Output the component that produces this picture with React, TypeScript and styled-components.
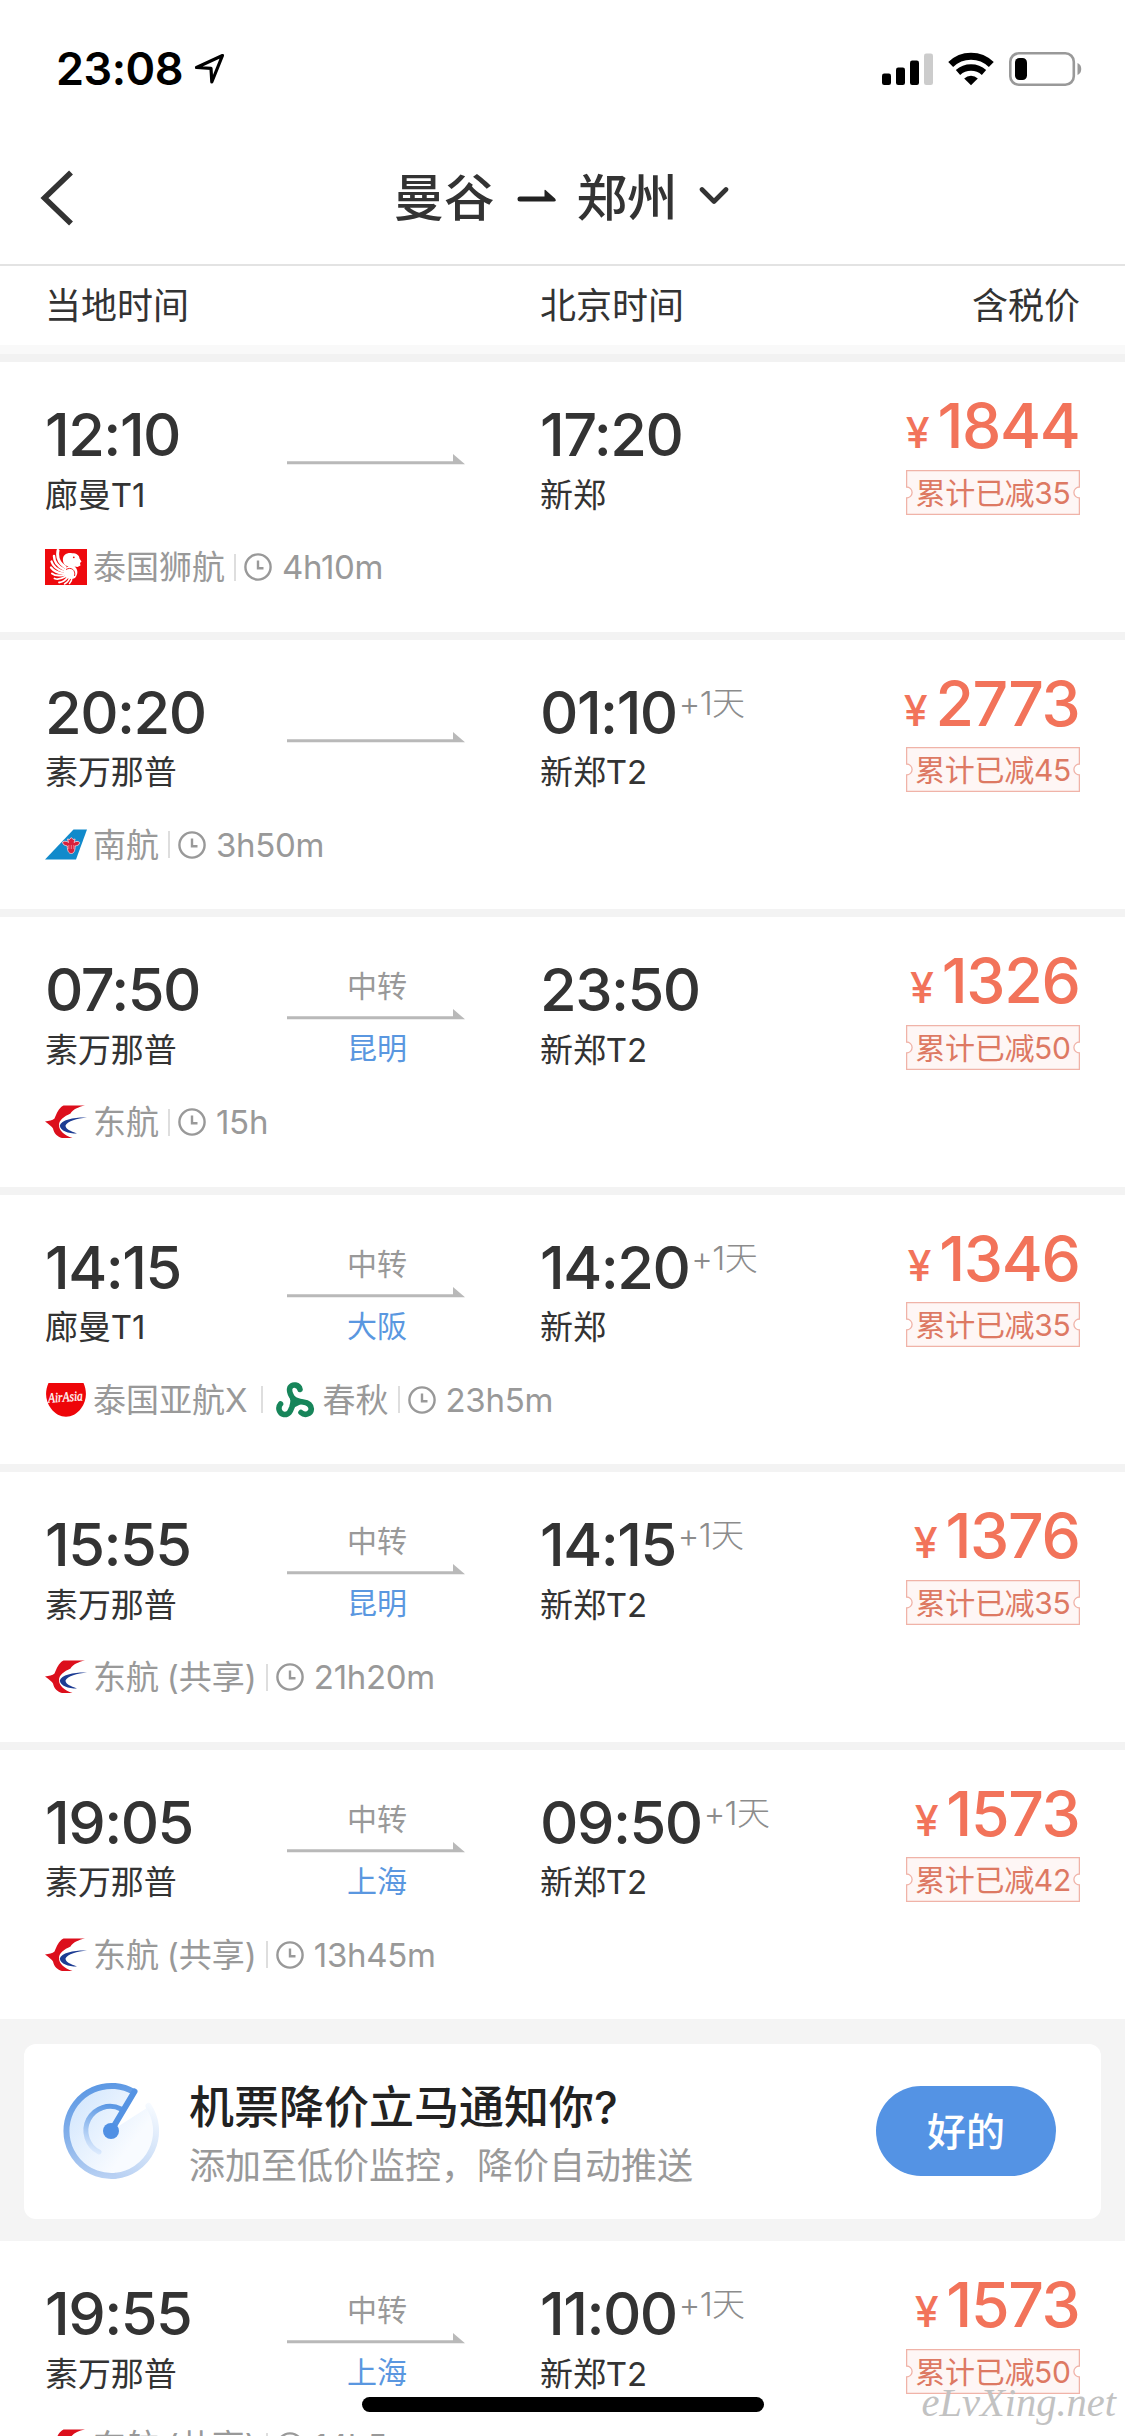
import React from "react";
import styled, { createGlobalStyle } from "styled-components";

const GlobalStyle = createGlobalStyle`
  * { box-sizing: border-box; }
  body {
    margin: 0;
    background: #fff;
    color: #333;
    font-family: Inter, "Noto Sans CJK SC", sans-serif;
    font-weight: 370;
  }
`;

const Screen = styled.div`
  position: relative;
  width: 1125px;
  height: 2436px;
  overflow: hidden;
  background: #fff;
  display: flex;
  flex-direction: column;
`;

const StatusBar = styled.div`
  flex: none;
  height: 132px;
  padding: 46px 43px 41px 56px;
  display: flex;
  align-items: center;
  color: #000;
`;

const Clock = styled.span`
  font-size: 45px;
  line-height: 45px;
  font-weight: 600;
  letter-spacing: -0.5px;
  margin-right: 11px;
`;

const StatusIcons = styled.div`
  margin-left: auto;
  display: flex;
  align-items: center;
  gap: 15px;
`;

const NavBar = styled.header`
  flex: none;
  height: 134px;
  padding: 0 40px;
  border-bottom: 2px solid #e3e3e3;
  display: grid;
  grid-template-columns: 48px 1fr 48px;
  align-items: center;
`;

const Title = styled.h1`
  margin: 0;
  padding-right: 3px;
  display: flex;
  align-items: center;
  justify-content: center;
  font-size: 50.5px;
  line-height: 60px;
  font-weight: 500;
  svg:first-of-type { margin: 0 20px 0 22px; }
  svg:last-of-type { margin-left: 21px; }
`;

const ColumnHeads = styled.div`
  flex: none;
  height: 79px;
  padding: 0 45px;
  display: grid;
  grid-template-columns: 495px 1fr auto;
  align-items: center;
  font-size: 36px;
  line-height: 40px;
`;

const HeaderShade = styled.div`
  flex: none;
  height: 17px;
  background: linear-gradient(#f9f9f9 0 9px, #f2f2f2 9px);
`;

const List = styled.div`
  flex: none;
  display: flex;
  flex-direction: column;
  gap: 8px;
  background: #f3f3f3;
`;

const Card = styled.article`
  height: 269.5px;
  padding: 32px 45px 0;
  background: #fff;
`;

const Main = styled.div`
  height: 120px;
  display: grid;
  grid-template-columns: 242px 178px 75px 1fr auto;
`;

const Stop = styled.div<{ $col: number }>`
  grid-column: ${(p) => p.$col};
  padding-top: 10px;
  display: flex;
  flex-direction: column;
  gap: 10.5px;
`;

const TimeRow = styled.div`
  display: flex;
  align-items: flex-start;
  white-space: nowrap;
`;

const Time = styled.span`
  font-size: 59.5px;
  line-height: 60px;
  font-weight: 500;
  letter-spacing: -1.5px;
`;

const DayShift = styled.sup`
  margin: 1px 0 0 2px;
  font-size: 33px;
  line-height: 40px;
  font-weight: 300;
  letter-spacing: -0.6px;
  color: #8c8c8c;
`;

const Airport = styled.div`
  font-size: 33px;
  line-height: 40px;
  letter-spacing: -0.1px;
  white-space: nowrap;
`;

const Route = styled.div`
  grid-column: 2;
  padding-top: 19px;
  height: 122px;
  display: grid;
  grid-template-rows: 36px 16px 46px;
  justify-items: center;
  align-items: end;
  font-size: 30px;
  line-height: 36px;
`;

const Via = styled.span`
  align-self: start;
  color: #999;
  padding-left: 2px;
`;

const ViaCity = styled(Via)`
  align-self: end;
  color: #5a97e0;
`;

const PriceCol = styled.div`
  grid-column: 5;
  display: flex;
  flex-direction: column;
  align-items: flex-end;
  gap: 13.5px;
`;

const Price = styled.div`
  display: flex;
  align-items: baseline;
  height: 62px;
  margin-right: 0.5px;
  color: #f2735a;
  font-size: 62.5px;
  line-height: 62px;
  font-weight: 500;
  letter-spacing: -1.3px;
`;

const Yen = styled.span`
  font-size: 43px;
  line-height: 43px;
  margin-right: 9px;
`;

const BadgeBox = styled.div`
  position: relative;
  width: 174px;
  height: 45px;
  display: flex;
  justify-content: center;
  font-size: 30px;
  line-height: 46px;
  letter-spacing: -0.3px;
  color: #dd7963;
  svg { position: absolute; inset: 0; }
  span { position: relative; }
`;

const Meta = styled.div`
  height: 40px;
  display: flex;
  align-items: center;
  font-size: 33px;
  line-height: 40px;
  color: #999;
  white-space: nowrap;
  margin-top: 33px;
`;

const Airline = styled.span`
  display: flex;
  align-items: center;
  word-spacing: -1.5px;
  svg { margin-right: 6px; flex: none; }
`;

const Bar = styled.i<{ $l: number; $r: number }>`
  width: 2px;
  height: 27px;
  background: #dedede;
  margin: 0 ${(p) => p.$r}px 0 ${(p) => p.$l}px;
`;

const Duration = styled.span`
  margin-left: 10px;
  letter-spacing: -0.3px;
`;

const Promo = styled.section`
  flex: none;
  height: 222px;
  padding: 25px 24px 22.5px;
  background: #f4f4f4;
`;

const PromoCard = styled.div`
  height: 174.5px;
  border-radius: 12px;
  background: #fff;
  padding: 0 45px 0 38px;
  display: flex;
  align-items: center;
`;

const PromoText = styled.div`
  margin-left: 29px;
  padding-top: 4px;
  flex: 1;
`;

const PromoTitle = styled.div`
  font-size: 45px;
  line-height: 60px;
  font-weight: 500;
  color: #222;
`;

const PromoSub = styled.div`
  font-size: 36px;
  line-height: 50px;
  margin-top: 3px;
  margin-bottom: -3px;
  color: #999;
`;

const OkButton = styled.button`
  width: 180px;
  height: 90px;
  border: 0;
  border-radius: 45px;
  background: #5493e4;
  color: #fff;
  font: 500 39px/90px Inter, "Noto Sans CJK SC", sans-serif;
`;

const HomeIndicator = styled.div`
  position: absolute;
  left: 362px;
  bottom: 24px;
  width: 402px;
  height: 15px;
  border-radius: 8px;
  background: #000;
`;

const Watermark = styled.div`
  position: absolute;
  right: 9px;
  bottom: 8px;
  font: italic 40.5px/50px "Liberation Serif", serif;
  color: #c2c2c2;
`;

const LocationIcon = () => (
  <svg width="31" height="32" viewBox="0 0 31 32" fill="none" stroke="#000" strokeWidth="3.2" strokeLinejoin="round">
    <path d="M28.5 2.500 2.500 14.500 17 15.300 17.800 29z" />
  </svg>
);

const SignalIcon = () => (
  <svg width="51" height="34" viewBox="0 0 51 34">
    <rect x="0" y="21.500" width="9" height="11.500" rx="2.200" />
    <rect x="14" y="15.500" width="9" height="17.500" rx="2.200" />
    <rect x="28" y="8.500" width="9" height="24.500" rx="2.200" />
    <rect x="42" y="1.500" width="9" height="31.500" rx="2.200" fill="#ccc" />
  </svg>
);

const WifiIcon = () => (
  <svg width="46" height="34" viewBox="0 0 46 34" fill="none" stroke="#000">
    <path d="M2.700 12.500A29 29 0 0 1 43.300 12.500" strokeWidth="7" />
    <path d="M10 20.500A19.500 19.500 0 0 1 36 20.500" strokeWidth="6.500" />
    <path d="M16.200 26.500A10 10 0 0 1 29.800 26.500L23 33.300z" fill="#000" stroke="none" />
  </svg>
);

const BatteryIcon = () => (
  <svg width="73" height="34" viewBox="0 0 73 34">
    <rect x="1.300" y="1.300" width="63.500" height="31.400" rx="8.500" fill="none" stroke="#999" strokeWidth="2.600" />
    <rect x="6" y="6" width="12" height="22" rx="4.500" />
    <path d="M68.500 11c5 1.500 5 10.500 0 12z" fill="#999" />
  </svg>
);

const BackIcon = () => (
  <svg width="34" height="56" viewBox="0 0 34 56" fill="none" stroke="#333" strokeWidth="5.600">
    <path d="M31 2.500 4.500 28 31 53.500" />
  </svg>
);

const TitleArrow = () => (
  <svg width="40" height="60" viewBox="0 0 40 60">
    <path d="M3 28.500h24.500V22.500q0-1 1-.5l9.500 8.500q2 3-1 3H3a2.500 2.500 0 0 1 0-5z" fill="#222" />
  </svg>
);

const DownIcon = () => (
  <svg width="30" height="60" viewBox="0 0 30 60" fill="none" stroke="#333" strokeWidth="4.600" strokeLinecap="round" strokeLinejoin="round">
    <path d="M3 21.500 15 33.500 27 21.500" />
  </svg>
);

const RouteArrow = () => (
  <svg width="178" height="11" viewBox="0 0 178 11" fill="#b9b9b9">
    <path d="M0 7.300H166V0L178 10.300H0z" />
  </svg>
);

const ClockIcon = () => (
  <svg width="28" height="28" viewBox="0 0 28 28" fill="none" stroke="#999" strokeWidth="2.400">
    <circle cx="14" cy="14" r="12.600" />
    <path d="M14 7.500V15.300H19.500" />
  </svg>
);

const LionLogo = () => (
  <svg width="42" height="36" viewBox="0 0 42 36">
    <rect width="42" height="36" fill="#ee0a0e" />
    <g fill="none" stroke="#fff" strokeLinecap="round">
      <path d="M13 1.500C11.500 9 14 14 20 18" strokeWidth="3" />
      <path d="M9 7C9 13 12 17 19 20.500" strokeWidth="2.500" />
      <path d="M6.500 12.500C8 17.500 12 20.500 18 22.500" strokeWidth="2.300" />
      <path d="M6 18.500C9 22.500 13 24 18 24.500" strokeWidth="2.200" />
      <path d="M7 24.500C10 27 14 27 19 26" strokeWidth="2" />
      <path d="M9.500 29.500C13 31 17 29.500 20.500 27.500" strokeWidth="1.900" />
      <path d="M14 33.500C18 33 20.500 31 22.500 28.500" strokeWidth="1.800" />
      <path d="M19.500 35C22.500 33.500 24 31 25 28.500M24.500 34.500C26 33 27 31 27 28" strokeWidth="1.500" />
    </g>
    <path d="M18 12C17 6 22 3.500 27 4.200C31 4 34.500 6 34.500 9.500L36.500 12.500 35 14l.5 2.500-3 1.500-3-.5C33 20 33.500 25 30 29C25 31.500 19 29 18.500 23.500C18.500 19 22 17.500 25 17.500C20.500 17.500 18.500 15 18 12z" fill="#fff" />
    <path d="M21 20.500C26 17.500 31 21 29.500 27" fill="none" stroke="#ee0a0e" strokeWidth=".9" />
    <circle cx="28.800" cy="8.300" r=".9" fill="#ee0a0e" />
  </svg>
);

const SouthernLogo = () => (
  <svg width="42" height="36" viewBox="0 0 42 36">
    <path d="M28.500 2.500H42L31 32.500H0z" fill="#118acb" />
    <path
      d="M17.500 15c2.500-1.500 5-.5 6 .5l-1-3.500 2 .5 1.800-2 1.800 2 2-.5-1 3.500c1.500-1.500 4.500-1.500 5.500 0 0 3-3 3-4.500 3.500 0 4.500-1 7.500-3.800 7.500s-4-3-4-7.500c-2-.5-4.800-1-4.800-4z"
      fill="#d9203a"
      stroke="#f4c6cf"
      strokeWidth=".9"
    />
    <path d="M23.800 18v4M26.300 18v4M28.800 18v4" stroke="#f3a9b4" strokeWidth=".7" />
  </svg>
);

const EasternLogo = () => (
  <svg width="42" height="36" viewBox="0 0 42 36">
    <path d="M18.500 1.500H40C33 3 28 5.500 25.500 9.500C19 12.500 14 16 14 21C14 27 19.500 31.500 27.500 34H17C12.500 33 9 29.500 8 24.500C7 22.500 4 20.500 0 17.500C4 17 7.500 16.500 9.500 14.500C11.500 10 13.500 4 18.500 1.500z" fill="#dc0f1c" />
    <path d="M42 13.500C31 13 16 15.500 14.800 21.500C15.500 27 23 29.500 32 29.500C25.500 27 20.500 25 20.500 21.500C22.500 17 32 14.500 42 13.500z" fill="#1d3c93" />
  </svg>
);

const AirAsiaLogo = () => (
  <svg width="42" height="36" viewBox="0 0 42 36">
    <path d="M3.500 1H38.500C42.500 10 41.500 19 36 26.500C28 37.500 14 37.500 6 26.500C.5 19-.5 10 3.500 1z" fill="#ee0509" />
    <text x="3" y="19.500" fill="#fff" stroke="#fff" strokeWidth=".3" fontFamily="Liberation Serif" fontStyle="italic" fontSize="14" textLength="35" lengthAdjust="spacingAndGlyphs" transform="rotate(-4 21 18)">AirAsia</text>
  </svg>
);

const SpringLogo = () => (
  <svg width="41" height="36" viewBox="0 0 41 36" fill="none" stroke="#17855a" strokeWidth="5.600" strokeLinecap="round" strokeLinejoin="round">
    <path d="M24 7.500C23 2.500 16.500 1.500 14 5.500C12.500 9 14 12 17 16.500" />
    <path d="M4.500 22C1.500 25.500 3 31.500 8 32.500C13 33 14.500 29 16 25C17 22 17.500 20 17 16.500" />
    <path d="M25 30.500C29 34 35 32 35.300 27C35 22.500 31 20.500 27 20C23 19.500 20 19 17 16.500" />
    <path d="M17 16 24 21 16 25z" fill="#17855a" strokeWidth="3" />
  </svg>
);

const RadarIcon = () => (
  <svg width="98" height="98" viewBox="0 0 98 98" fill="none">
    <defs>
      <linearGradient id="ring" x1="40" y1="2" x2="54" y2="94" gradientUnits="userSpaceOnUse">
        <stop offset="0" stopColor="#5c98e4" />
        <stop offset=".5" stopColor="#84b0ea" />
        <stop offset="1" stopColor="#b9d1f3" />
      </linearGradient>
      <linearGradient id="disc" x1="15" y1="20" x2="70" y2="62" gradientUnits="userSpaceOnUse">
        <stop offset="0" stopColor="#d6e8fd" />
        <stop offset="1" stopColor="#f8fbff" />
      </linearGradient>
      <linearGradient id="inner" x1="50" y1="24" x2="38" y2="72" gradientUnits="userSpaceOnUse">
        <stop offset="0" stopColor="#5c98e4" />
        <stop offset="1" stopColor="#dceafd" />
      </linearGradient>
      <linearGradient id="tail" x1="54" y1="94" x2="88" y2="22" gradientUnits="userSpaceOnUse">
        <stop offset="0" stopColor="#b9d1f3" />
        <stop offset=".6" stopColor="#dce9fa" />
        <stop offset="1" stopColor="#f6faff" />
      </linearGradient>
    </defs>
    <path d="M49 49 72 9A46 46 0 1 0 88 24z" fill="url(#disc)" />
    <path d="M86.500 24A45 45 0 0 1 54 93.700" stroke="url(#tail)" strokeWidth="6" strokeLinecap="round" />
    <path d="M72 10A45 45 0 1 0 54 93.700" stroke="url(#ring)" strokeWidth="6" />
    <path d="M59 27A24 24 0 0 0 37 70" stroke="url(#inner)" strokeWidth="5" strokeLinecap="round" />
    <path d="M49 49 72.500 9.500" stroke="#5593e3" strokeWidth="6" strokeLinejoin="round" strokeLinecap="round" />
    <circle cx="49" cy="49" r="8" fill="#5090e4" />
  </svg>
);

const Badge = ({ amount }: { amount: number }) => (
  <BadgeBox>
    <svg width="174" height="45" viewBox="0 0 174 45" fill="#fef6f5" stroke="#f0b3a8" strokeWidth="1.300">
      <path d="M.6.6H173.400V17A5.500 5.500 0 0 0 173.400 28V44.400H.6V28A5.500 5.500 0 0 0 .6 17z" />
    </svg>
    <span>累计已减{amount}</span>
  </BadgeBox>
);

const logos = { lion: LionLogo, southern: SouthernLogo, eastern: EasternLogo, airasia: AirAsiaLogo, spring: SpringLogo };

type Flight = {
  dep: string;
  from: string;
  arr: string;
  to: string;
  nextDay?: boolean;
  via?: string;
  price: number;
  cut: number;
  airlines: [keyof typeof logos, string][];
  duration: string;
};

const flights: Flight[] = [
  { dep: "12:10", from: "廊曼T1", arr: "17:20", to: "新郑", price: 1844, cut: 35, airlines: [["lion", "泰国狮航"]], duration: "4h10m" },
  { dep: "20:20", from: "素万那普", arr: "01:10", to: "新郑T2", nextDay: true, price: 2773, cut: 45, airlines: [["southern", "南航"]], duration: "3h50m" },
  { dep: "07:50", from: "素万那普", arr: "23:50", to: "新郑T2", via: "昆明", price: 1326, cut: 50, airlines: [["eastern", "东航"]], duration: "15h" },
  { dep: "14:15", from: "廊曼T1", arr: "14:20", to: "新郑", nextDay: true, via: "大阪", price: 1346, cut: 35, airlines: [["airasia", "泰国亚航X"], ["spring", "春秋"]], duration: "23h5m" },
  { dep: "15:55", from: "素万那普", arr: "14:15", to: "新郑T2", nextDay: true, via: "昆明", price: 1376, cut: 35, airlines: [["eastern", "东航 (共享)"]], duration: "21h20m" },
  { dep: "19:05", from: "素万那普", arr: "09:50", to: "新郑T2", nextDay: true, via: "上海", price: 1573, cut: 42, airlines: [["eastern", "东航 (共享)"]], duration: "13h45m" },
  { dep: "19:55", from: "素万那普", arr: "11:00", to: "新郑T2", nextDay: true, via: "上海", price: 1573, cut: 50, airlines: [["eastern", "东航 (共享)"]], duration: "14h5m" },
];

const FlightCard = ({ flight: f }: { flight: Flight }) => (
  <Card>
    <Main>
      <Stop $col={1}>
        <TimeRow><Time>{f.dep}</Time></TimeRow>
        <Airport>{f.from}</Airport>
      </Stop>
      <Route>
        <Via>{f.via && "中转"}</Via>
        <RouteArrow />
        <ViaCity>{f.via}</ViaCity>
      </Route>
      <Stop $col={4}>
        <TimeRow>
          <Time>{f.arr}</Time>
          {f.nextDay && <DayShift>+1天</DayShift>}
        </TimeRow>
        <Airport>{f.to}</Airport>
      </Stop>
      <PriceCol>
        <Price><Yen>¥</Yen>{f.price}</Price>
        <Badge amount={f.cut} />
      </PriceCol>
    </Main>
    <Meta>
      {f.airlines.map(([logo, name], i) => {
        const Logo = logos[logo];
        return (
          <React.Fragment key={logo}>
            {i > 0 && <Bar $l={13} $r={13} />}
            <Airline><Logo />{name}</Airline>
          </React.Fragment>
        );
      })}
      <Bar $l={9} $r={8} />
      <ClockIcon />
      <Duration>{f.duration}</Duration>
    </Meta>
  </Card>
);

export default function App() {
  return (
    <Screen>
      <GlobalStyle />
      <StatusBar>
        <Clock>23:08</Clock>
        <LocationIcon />
        <StatusIcons>
          <SignalIcon />
          <WifiIcon />
          <BatteryIcon />
        </StatusIcons>
      </StatusBar>
      <NavBar>
        <BackIcon />
        <Title>曼谷<TitleArrow />郑州<DownIcon /></Title>
      </NavBar>
      <ColumnHeads>
        <span>当地时间</span>
        <span>北京时间</span>
        <span>含税价</span>
      </ColumnHeads>
      <HeaderShade />
      <List>
        {flights.slice(0, 6).map((f) => <FlightCard key={f.dep} flight={f} />)}
      </List>
      <Promo>
        <PromoCard>
          <RadarIcon />
          <PromoText>
            <PromoTitle>机票降价立马通知你?</PromoTitle>
            <PromoSub>添加至低价监控，降价自动推送</PromoSub>
          </PromoText>
          <OkButton>好的</OkButton>
        </PromoCard>
      </Promo>
      <List>
        {flights.slice(6).map((f) => <FlightCard key={f.dep} flight={f} />)}
      </List>
      <HomeIndicator />
      <Watermark>eLvXing.net</Watermark>
    </Screen>
  );
}
